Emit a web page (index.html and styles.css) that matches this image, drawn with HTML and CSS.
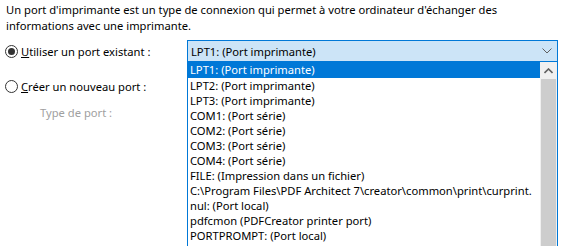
FILE: index.html
```html
<!DOCTYPE HTML>
<html lang="fr-FR">
<head>
<meta charset="utf-8" />
<title>Port d'imprimante</title>
<link rel="stylesheet" href="styles.css">
</head>
<body>
<p class="intro">Un port d'imprimante est un type de connexion qui permet à votre ordinateur d'échanger des<br>informations avec une imprimante.</p>

<div class="row">
  <label class="radio"><span class="dot on"></span><span><u>U</u>tiliser un port existant :</span></label>
  <div class="combo">
    <div class="combo-val">LPT1: (Port imprimante)</div>
    <svg class="chev" width="10" height="6" viewBox="0 0 10 6"><path d="M0.5 0.5 L5 5 L9.5 0.5" fill="none" stroke="#606060" stroke-width="1"/></svg>
    <div class="drop">
      <ul class="items">
        <li class="sel">LPT1: (Port imprimante)</li>
        <li>LPT2: (Port imprimante)</li>
        <li>LPT3: (Port imprimante)</li>
        <li>COM1: (Port série)</li>
        <li>COM2: (Port série)</li>
        <li>COM3: (Port série)</li>
        <li>COM4: (Port série)</li>
        <li>FILE: (Impression dans un fichier)</li>
        <li>C:\Program Files\PDF Architect 7\creator\common\print\curprint.</li>
        <li>nul: (Port local)</li>
        <li>pdfcmon (PDFCreator printer port)</li>
        <li>PORTPROMPT: (Port local)</li>
      </ul>
      <div class="vscroll">
        <div class="arrow"><svg width="9" height="6" viewBox="0 0 9 6"><path d="M0.5 5 L4.5 1 L8.5 5" fill="none" stroke="#606060" stroke-width="1.6"/></svg></div>
        <div class="thumb"></div>
      </div>
    </div>
  </div>
</div>

<div class="row two">
  <label class="radio"><span class="dot"></span><span><u>C</u>réer un nouveau port :</span></label>
</div>
<div class="type">Type de port :</div>
</body>
</html>
```
FILE: styles.css
```css
body {
  margin: 0;
  background: #ffffff;
  font-family: "Noto Sans", "Open Sans", sans-serif;
  font-size: 11.2px;
  color: #000000;
  width: 562px;
  height: 246px;
  overflow: hidden;
}

.intro {
  margin: 0;
  padding: 2px 6px 0 6px;
  line-height: 16px;
  white-space: nowrap;
}

.row {
  display: flex;
  align-items: flex-start;
  margin-top: 6px;
  padding-left: 5px;
}

.radio {
  display: flex;
  align-items: center;
  gap: 3px;
  width: 182px;
  height: 22px;
}
.radio u { text-decoration: underline; }

.dot {
  width: 11px;
  height: 11px;
  border: 1px solid #333333;
  border-radius: 50%;
  position: relative;
  flex: none;
}
.dot.on::after {
  content: "";
  position: absolute;
  left: 2px;
  top: 2px;
  width: 7px;
  height: 7px;
  border-radius: 50%;
  background: #333333;
}

.combo {
  position: relative;
  width: 369px;
  height: 20px;
  border: 1px solid #0078d7;
  background: #cce4f7;
  display: flex;
  align-items: center;
}
.combo-val { padding-left: 3px; flex: 1; }
.chev { margin-right: 5px; }

.drop {
  position: absolute;
  left: -1px;
  top: 21px;
  width: 369px;
  height: 200px;
  border: 1px solid #0078d7;
  border-top: none;
  background: #ffffff;
  display: flex;
}

.items {
  list-style: none;
  margin: 0;
  padding: 0;
  flex: 1;
}
.items li {
  height: 15px;
  line-height: 15px;
  padding-left: 2px;
  white-space: nowrap;
  overflow: hidden;
}
.items li.sel {
  background: #0078d7;
  color: #ffffff;
  height: 16px;
  line-height: 16px;
}

.vscroll {
  width: 17px;
  background: #f0f0f0;
  display: flex;
  flex-direction: column;
}
.arrow {
  height: 17px;
  display: flex;
  align-items: center;
  justify-content: center;
}
.thumb {
  flex: 1;
  background: #cdcdcd;
  margin: 0 1px;
}

.two { margin-top: 13px; }

.type {
  margin: 8px 0 0 40px;
  color: #a0a0a0;
}
```
